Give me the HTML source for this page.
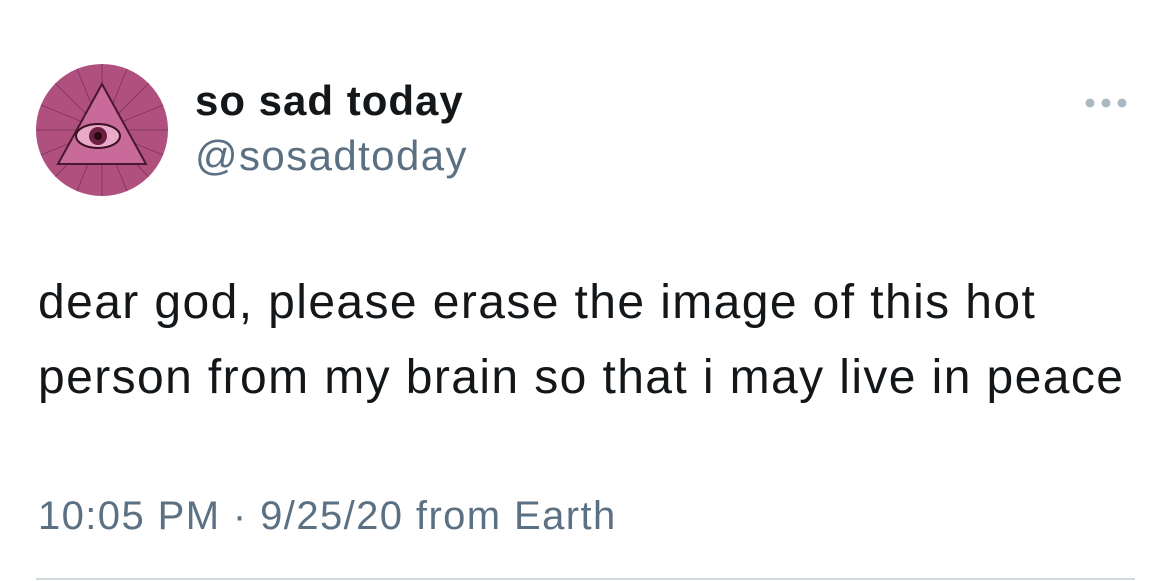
<!DOCTYPE html>
<html><head><style>
body{margin:0;width:1170px;height:581px;background:#fff;font-family:"Liberation Sans",sans-serif;position:relative;overflow:hidden}
.t{position:absolute;white-space:nowrap;left:0;top:0;line-height:1}
</style></head><body>
<svg style="position:absolute;left:36px;top:64px" width="132" height="132" viewBox="0 0 132 132">
<defs><clipPath id="c"><circle cx="66" cy="66" r="66"/></clipPath></defs>
<circle cx="66" cy="66" r="66" fill="#b0507f"/>
<g clip-path="url(#c)" stroke="#5a1f3e" stroke-width="0.8" opacity="0.6">
<path d="M66 66L66 0M66 66L132 66M66 66L66 132M66 66L0 66M66 66L113 19M66 66L113 113M66 66L19 113M66 66L19 19M66 66L91 5M66 66L127 41M66 66L127 91M66 66L91 127M66 66L41 127M66 66L5 91M66 66L5 41M66 66L41 5"/>
</g>
<polygon points="66,20 110,100 22,100" fill="#c86a9a" stroke="#4a1830" stroke-width="2"/>
<ellipse cx="62" cy="72" rx="22" ry="12" fill="#e9a9c8" stroke="#3a1020" stroke-width="2"/>
<circle cx="62" cy="72" r="9" fill="#6a2040"/>
<circle cx="62" cy="72" r="4" fill="#2a0810"/>
</svg>
<div class="t" style="left:195px;top:80px;font-size:42px;letter-spacing:1px;font-weight:bold;color:#14171a">so sad today</div>
<div class="t" style="left:195px;top:135px;font-size:42px;letter-spacing:1.4px;color:#5b7083">@sosadtoday</div>
<div style="position:absolute;left:1084px;top:96px;width:48px;height:12px"><svg width="48" height="12"><circle cx="6" cy="6" r="4.5" fill="#aab8c2"/><circle cx="22" cy="6" r="4.5" fill="#aab8c2"/><circle cx="38" cy="6" r="4.5" fill="#aab8c2"/></svg></div>
<div class="t" style="left:38px;top:279px;font-size:48px;letter-spacing:1.4px;color:#14171a">dear god, please erase the image of this hot</div>
<div class="t" style="left:38px;top:354px;font-size:48px;letter-spacing:1.4px;color:#14171a">person from my brain so that i may live in peace</div>
<div class="t" style="left:38px;top:496px;font-size:40px;letter-spacing:1.4px;color:#5b7083">10:05 PM · 9/25/20 from Earth</div>
<div style="position:absolute;left:36px;top:578px;width:1099px;height:2px;background:#cfd9de"></div>
</body></html>
